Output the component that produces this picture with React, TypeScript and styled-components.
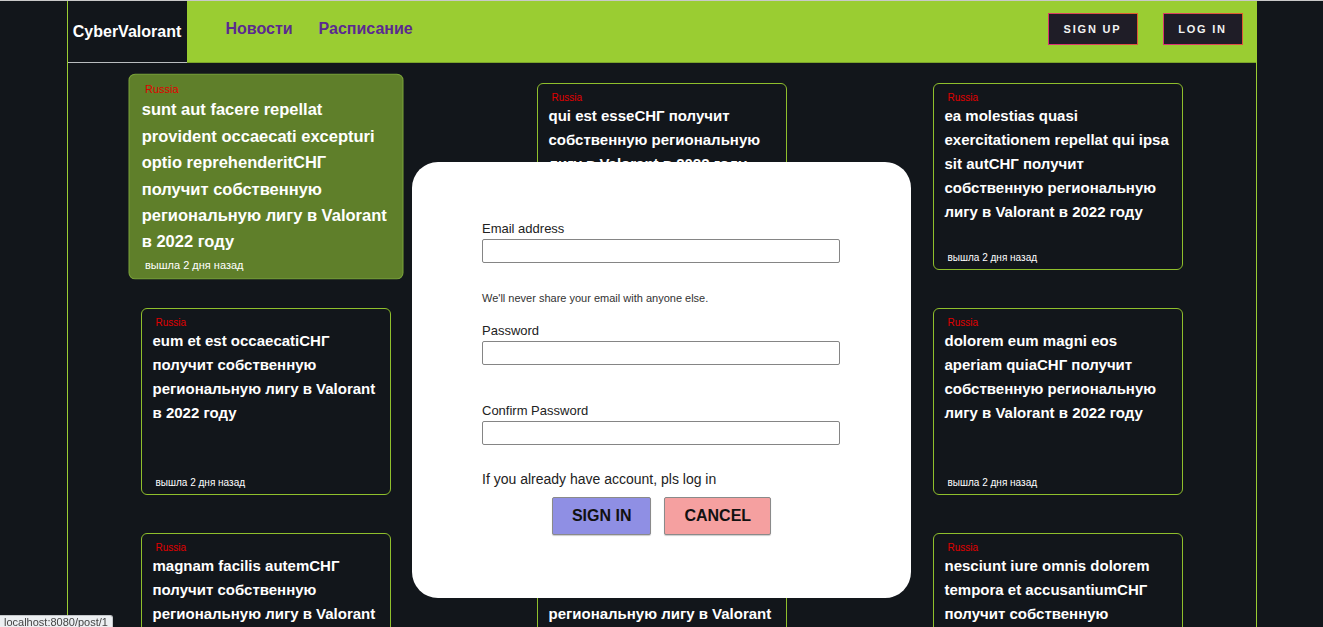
import React from "react";
import styled, { createGlobalStyle, css } from "styled-components";

const GlobalStyle = createGlobalStyle`
  html, body {
    margin: 0;
    padding: 0;
    background: #12161b;
  }
  body {
    border-top: 1px solid #c9c9c9;
    font-family: "Liberation Sans", Arial, sans-serif;
    overflow: hidden;
  }
`;

const Page = styled.div`
  width: 1190px;
  margin: 0 auto;
  min-height: 626px;
  box-sizing: border-box;
  border-left: 1px solid #9acd32;
  border-right: 1px solid #9acd32;
`;

const Header = styled.header`
  display: flex;
  height: 62px;
`;

const Logo = styled.div`
  width: 119px;
  display: flex;
  align-items: center;
  justify-content: center;
  box-sizing: border-box;
  border-bottom: 1px solid #b9bcbf;
  color: #fff;
  font-weight: bold;
  font-size: 16px;
`;

const Nav = styled.nav`
  flex: 1;
  display: flex;
  align-items: center;
  background: #9acd32;
  border-bottom: 1px solid #7ca52a;
  padding: 0 13px 0 39px;
`;

const NavLink = styled.a`
  color: #5a2a90;
  font-weight: bold;
  font-size: 16px;
  text-decoration: none;
  margin-right: 26px;
  margin-top: -5px;
`;

const Spacer = styled.div`
  flex: 1;
`;

const HeadButton = styled.button<{ $w: number }>`
  width: ${(p) => p.$w}px;
  height: 32px;
  margin-left: 25px;
  margin-top: -5px;
  background: #1f1d27;
  color: #f2f2f2;
  font-family: "Liberation Sans", Arial, sans-serif;
  font-weight: bold;
  font-size: 11px;
  letter-spacing: 1.8px;
  border: 1px solid;
  border-image: linear-gradient(45deg, #d8307a, #e0602a) 1;
  cursor: pointer;
`;

const Grid = styled.div`
  display: grid;
  grid-template-columns: repeat(3, 1fr);
  justify-items: center;
  row-gap: 38px;
  padding-top: 20px;
`;

const Card = styled.div<{ $hover?: boolean }>`
  width: 250px;
  height: 187px;
  box-sizing: border-box;
  padding: 7px 10px 5px 11px;
  border: 1px solid #8fbf2c;
  border-radius: 6px;
  background: #12161b;
  display: flex;
  flex-direction: column;
  color: #fff;
  ${(p) =>
    p.$hover &&
    css`
      background: #5f7f2a;
      border-color: #7aa23a;
      transform: scale(1.1);
    `}
`;

const Country = styled.div`
  color: #e00000;
  font-size: 10px;
  line-height: 13px;
  margin-left: 3px;
`;

const Title = styled.h3`
  margin: 0;
  font-size: 15px;
  line-height: 24px;
  font-weight: bold;
`;

const Posted = styled.div`
  margin-top: auto;
  font-size: 10px;
  line-height: 12px;
  margin-left: 3px;
`;

const Overlay = styled.div`
  position: fixed;
  inset: 0;
  display: flex;
  justify-content: center;
  align-items: flex-start;
  padding-top: 162px;
`;

const Modal = styled.div`
  width: 499px;
  height: 436px;
  box-sizing: border-box;
  background: #fff;
  border-radius: 26px;
  padding: 59px 70px 0 70px;
  color: #222;
`;

const Label = styled.label<{ $gap: number }>`
  display: block;
  font-size: 13px;
  line-height: 15px;
  margin-top: ${(p) => p.$gap}px;
  margin-bottom: 3px;
`;

const Input = styled.input`
  display: block;
  width: 358px;
  height: 24px;
  box-sizing: border-box;
  border: 1px solid #858585;
  border-radius: 2px;
  margin: 0;
`;

const Hint = styled.div`
  font-size: 11px;
  line-height: 14px;
  margin-top: 28px;
  color: #333;
`;

const Account = styled.p`
  margin: 26px 0 0;
  font-size: 14px;
  line-height: 16px;
`;

const Actions = styled.div`
  display: flex;
  justify-content: center;
  gap: 13px;
  margin-top: 10px;
`;

const ActionButton = styled.button<{ $bg: string }>`
  height: 38px;
  padding: 0 19px;
  background: ${(p) => p.$bg};
  border: 1px solid #8a8a8a;
  border-radius: 2px;
  font-family: "Liberation Sans", Arial, sans-serif;
  font-weight: bold;
  font-size: 16px;
  color: #111;
  box-shadow: 0 1px 1px rgba(0, 0, 0, 0.2);
`;

const StatusBar = styled.div`
  position: fixed;
  left: 0;
  bottom: 0;
  padding: 0 4px;
  height: 11px;
  line-height: 12px;
  font-size: 11px;
  color: #444;
  background: #eceff2;
  border: 1px solid #c4c7ca;
  border-left: none;
  border-bottom: none;
  border-top-right-radius: 3px;
`;

const suffix = "СНГ получит собственную региональную лигу в Valorant в 2022 году";

const posts = [
  "sunt aut facere repellat provident occaecati excepturi optio reprehenderit",
  "qui est esse",
  "ea molestias quasi exercitationem repellat qui ipsa sit aut",
  "eum et est occaecati",
  "nesciunt quas odio",
  "dolorem eum magni eos aperiam quia",
  "magnam facilis autem",
  "dolorem dolore est ipsam",
  "nesciunt iure omnis dolorem tempora et accusantium",
];

export default function App() {
  return (
    <>
      <GlobalStyle />
      <Page>
        <Header>
          <Logo>CyberValorant</Logo>
          <Nav>
            <NavLink href="#">Новости</NavLink>
            <NavLink href="#">Расписание</NavLink>
            <Spacer />
            <HeadButton $w={90}>SIGN UP</HeadButton>
            <HeadButton $w={80}>LOG IN</HeadButton>
          </Nav>
        </Header>
        <Grid>
          {posts.map((title, i) => (
            <Card key={i} $hover={i === 0}>
              <Country>Russia</Country>
              <Title>{title + suffix}</Title>
              <Posted>вышла 2 дня назад</Posted>
            </Card>
          ))}
        </Grid>
      </Page>
      <Overlay>
        <Modal>
          <Label $gap={0}>Email address</Label>
          <Input type="email" />
          <Hint>We'll never share your email with anyone else.</Hint>
          <Label $gap={18}>Password</Label>
          <Input type="password" />
          <Label $gap={38}>Confirm Password</Label>
          <Input type="password" />
          <Account>If you already have account, pls log in</Account>
          <Actions>
            <ActionButton $bg="#8f8fe4">SIGN IN</ActionButton>
            <ActionButton $bg="#f5a0a0">CANCEL</ActionButton>
          </Actions>
        </Modal>
      </Overlay>
      <StatusBar>localhost:8080/post/1</StatusBar>
    </>
  );
}
